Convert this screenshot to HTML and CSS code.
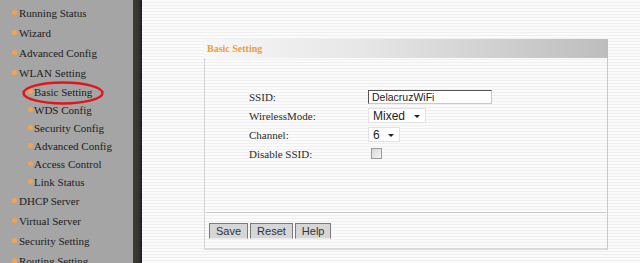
FILE: index.html
```html
<!DOCTYPE html>
<html lang="en">
<head>
    <meta charset="UTF-8">
    <title>WLAN Basic Setting</title>
    <link rel="stylesheet" href="styles.css">
</head>
<body>
    <div class="page">
        <!-- Side Menu -->
        <div class="menu">
            <ul class="menu-list">
                <li class="item">Running Status</li>
                <li class="item">Wizard</li>
                <li class="item">Advanced Config</li>
                <li class="item">WLAN Setting</li>
                <li class="sub">Basic Setting</li>
                <li class="sub">WDS Config</li>
                <li class="sub">Security Config</li>
                <li class="sub">Advanced Config</li>
                <li class="sub">Access Control</li>
                <li class="sub">Link Status</li>
                <li class="item">DHCP Server</li>
                <li class="item">Virtual Server</li>
                <li class="item">Security Setting</li>
                <li class="item">Routing Setting</li>
            </ul>
            <svg class="circle-mark" width="84" height="26" viewBox="0 0 84 26">
                <ellipse cx="42" cy="13" rx="39.5" ry="10.5" fill="none" stroke="#e3141a" stroke-width="2.4"/>
            </svg>
        </div>
        <div class="divider"></div>

        <!-- Main Panel -->
        <div class="main">
            <div class="panel">
                <div class="panel-header">Basic Setting</div>
                <div class="panel-body">
                    <div class="form">
                        <label class="label">SSID:</label>
                        <input class="text-input" type="text" value="DelacruzWiFi">

                        <label class="label">WirelessMode:</label>
                        <span class="select wide">Mixed<span class="arrow"></span></span>

                        <label class="label">Channel:</label>
                        <span class="select narrow">6<span class="arrow"></span></span>

                        <label class="label">Disable SSID:</label>
                        <span class="checkbox"></span>
                    </div>
                    <div class="actions">
                        <button class="btn">Save</button>
                        <button class="btn">Reset</button>
                        <button class="btn">Help</button>
                    </div>
                </div>
            </div>
        </div>
    </div>
</body>
</html>
```

FILE: styles.css
```css
* {
    margin: 0;
    padding: 0;
    box-sizing: border-box;
}

body {
    width: 640px;
    height: 263px;
    overflow: hidden;
    font-family: "Liberation Serif", "Times New Roman", serif;
}

.page {
    display: flex;
    height: 263px;
}

.menu {
    position: relative;
    width: 133px;
    background-color: #a5a5a5;
}

.menu-list {
    list-style: none;
    padding-top: 3px;
    font-size: 11px;
    color: #1c1c1c;
}

.menu-list li {
    position: relative;
    white-space: nowrap;
}

.menu-list li::before {
    content: "";
    position: absolute;
    width: 5px;
    height: 5px;
    border-radius: 50%;
    background-color: #f6a44a;
    top: 50%;
    margin-top: -3px;
}

.item {
    line-height: 20px;
    padding-left: 19px;
}

.item::before {
    left: 12px;
}

.sub {
    line-height: 18px;
    padding-left: 34px;
}

.sub::before {
    left: 28px;
}

.circle-mark {
    position: absolute;
    left: 21px;
    top: 80px;
}

.divider {
    width: 9px;
    background: linear-gradient(to right, #3d3b36 0, #35332f 6px, #1c1c1c 9px);
}

.main {
    flex: 1;
    padding: 39px 0 0 61px;
    background: repeating-linear-gradient(to bottom, #fbfbfb 0, #fbfbfb 2px, #efefef 2px, #efefef 3px);
}

.panel {
    width: 405px;
}

.panel-header {
    height: 19px;
    line-height: 19px;
    padding-left: 4px;
    font-size: 10px;
    font-weight: bold;
    color: #f29a3e;
    background: linear-gradient(to right, #f7f7f7 0, #e6e6e6 40%, #bdbdbd 100%);
}

.panel-body {
    margin-left: 1px;
    border-left: 1px solid #d2d2d2;
    border-right: 1px solid #c9c9c9;
    border-bottom: 2px solid #dadada;
}

.form {
    display: grid;
    grid-template-columns: 119px auto;
    grid-auto-rows: 19px;
    align-items: center;
    justify-items: start;
    height: 154px;
    padding: 29px 0 0 44px;
}

.label {
    font-size: 11px;
    color: #2b2b2b;
}

.text-input {
    width: 124px;
    height: 14px;
    padding: 0 3px;
    border: 1px solid #6e6e6e;
    border-color: #555 #c8c8c8 #c8c8c8 #555;
    background: white;
    font-family: "Liberation Sans", Arial, sans-serif;
    font-size: 10.5px;
    color: #222;
    outline: none;
}

.select {
    position: relative;
    height: 15px;
    line-height: 14px;
    padding-left: 4px;
    border: 1px solid #e2e2e2;
    background: white;
    font-family: "Liberation Sans", Arial, sans-serif;
    font-size: 12px;
    color: #222;
}

.select.wide {
    width: 58px;
}

.select.narrow {
    width: 32px;
}

.arrow {
    position: absolute;
    right: 5px;
    top: 6px;
    border-left: 3px solid transparent;
    border-right: 3px solid transparent;
    border-top: 3px solid #222;
}

.checkbox {
    width: 11px;
    height: 11px;
    margin-left: 3px;
    border: 1px solid #9a9a9a;
    background: linear-gradient(135deg, #d8d8d8, #f3f3f3);
}

.actions {
    display: flex;
    gap: 2px;
    margin: 0 1px;
    padding: 10px 0 9px 3px;
    border-top: 1px solid #c9c9c9;
}

.btn {
    height: 16px;
    padding: 0 6px;
    border: 1px solid #7a7a7a;
    border-bottom-color: #ececec;
    background-color: #d6d6d6;
    font-family: "Liberation Sans", Arial, sans-serif;
    font-size: 11px;
    color: #333;
}
```
